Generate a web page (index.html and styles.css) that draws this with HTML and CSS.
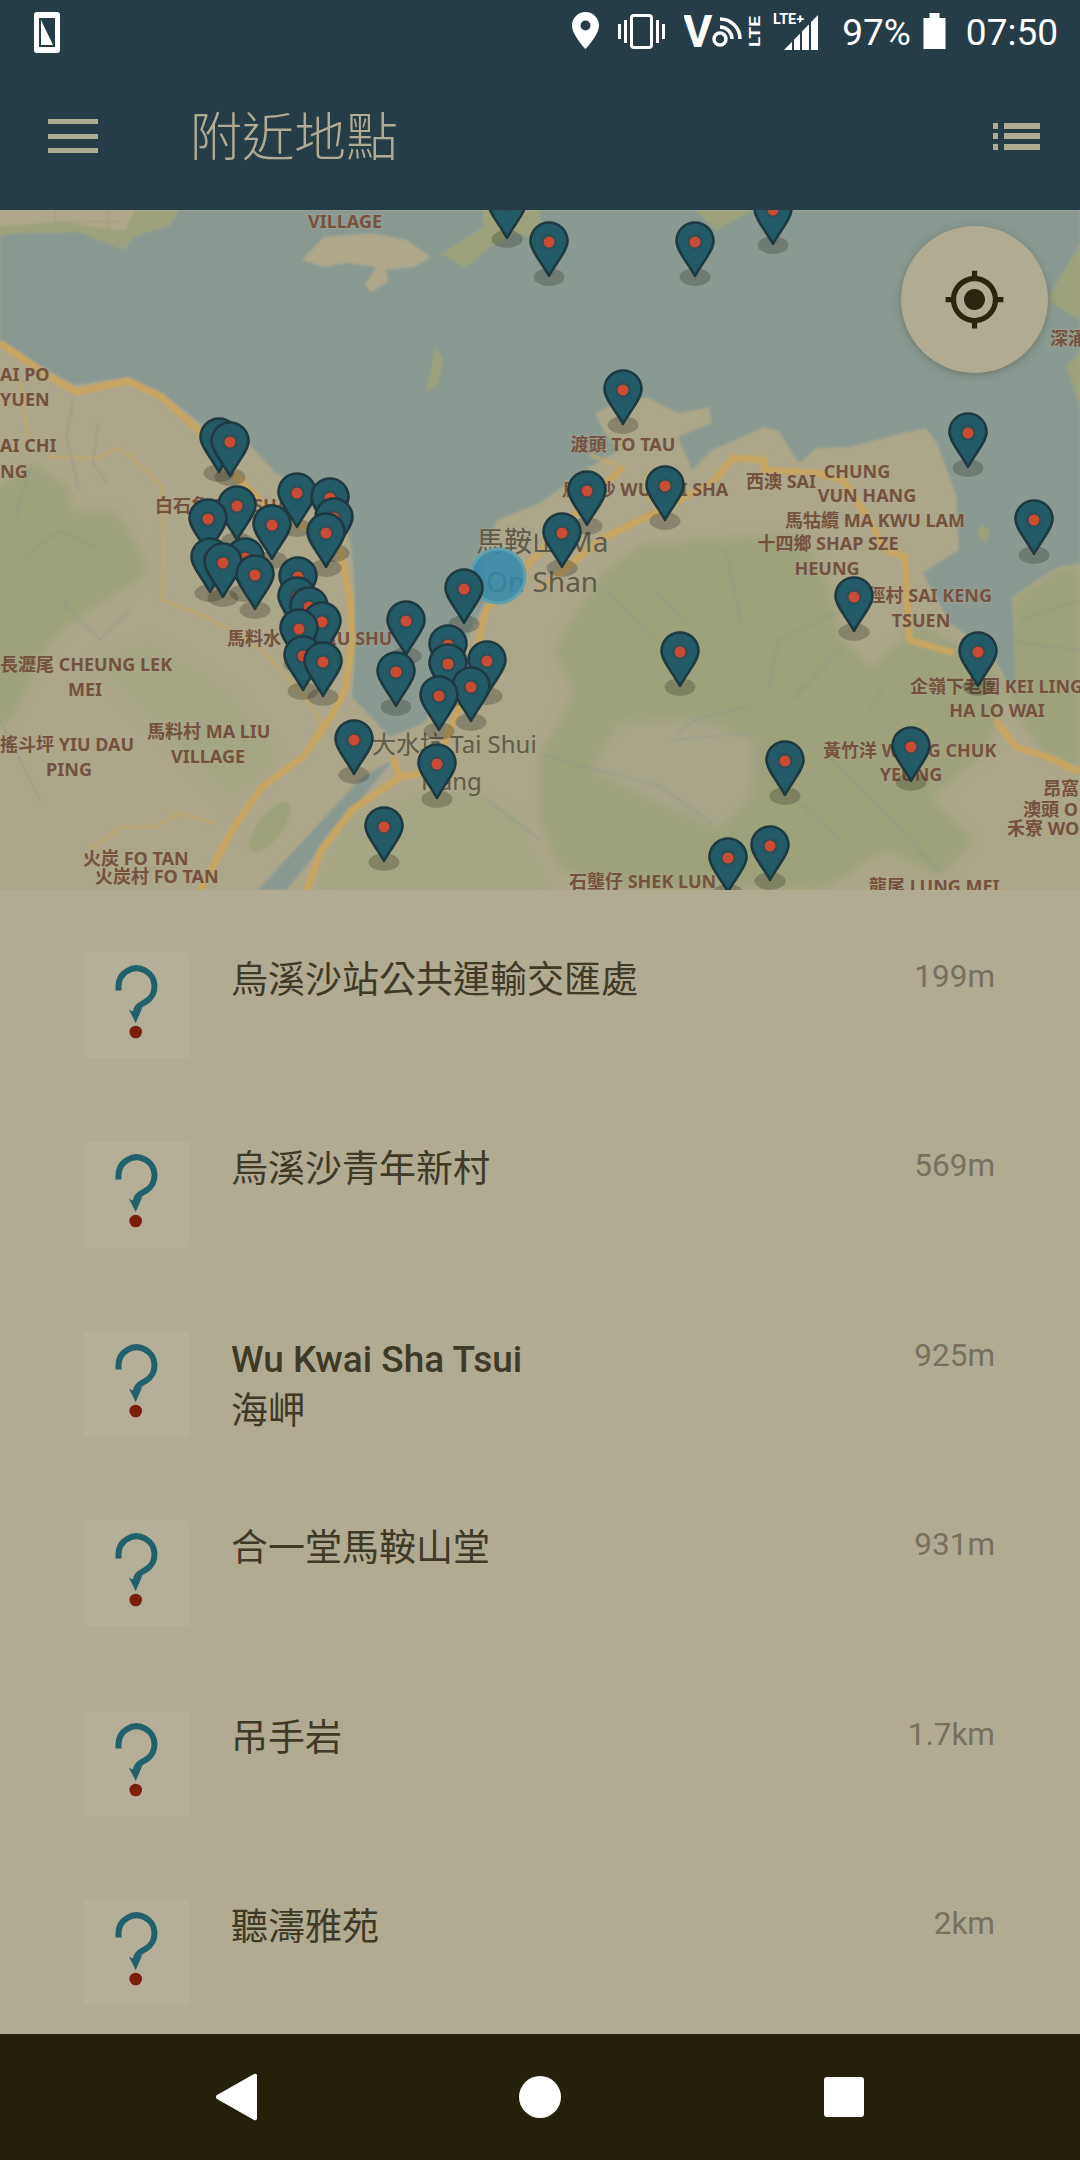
FILE: index.html
```html
<!DOCTYPE html>
<html>
<head lang="zh-Hant">
    <meta charset="UTF-8">
    <title>附近地點</title>
    <link rel="stylesheet" href="styles.css">
</head>
<body>
<div class="screen">
    <header class="appHeader">
        <div class="statusBar">
            <svg class="simIcon" viewBox="0 0 26 41"><path d="M3 0h20a3 3 0 0 1 3 3v35a3 3 0 0 1-3 3H3a3 3 0 0 1-3-3V3a3 3 0 0 1 3-3z" fill="#fff"/><path d="M5 6h16v29H5z" fill="#263c47"/><path d="M7 8l12 25H7z" fill="#fff"/></svg>
            <div class="statusRight">
                <svg class="locIcon" viewBox="0 0 27 37"><path d="M13.500 0C6 0 0 6 0 13.500 0 23 13.500 37 13.500 37S27 23 27 13.500C27 6 21 0 13.500 0zm0 18.500a5 5 0 1 1 0-10 5 5 0 0 1 0 10z" fill="#fff"/></svg>
                <svg class="vibIcon" viewBox="0 0 47 35"><path d="M0 10h3v15H0zM44 10h3v15h-3zM6 6h3v23H6zM38 6h3v23h-3z" fill="#fff"/><rect x="13.500" y="1.500" width="20" height="32" rx="2.500" fill="none" stroke="#fff" stroke-width="3"/></svg>
                <svg class="netIcon" viewBox="0 0 136 66">
                    <text x="-1" y="47" class="netV">V</text>
                    <circle cx="36" cy="39" r="6" fill="none" stroke="#fff" stroke-width="3.500"/>
                    <path d="M36 27a12 12 0 0 1 12 12M36 19a20 20 0 0 1 20 20" fill="none" stroke="#fff" stroke-width="3.500"/>
                    <text transform="translate(76 47) rotate(-90)" class="netLte" textLength="31" lengthAdjust="spacingAndGlyphs">LTE</text>
                    <text x="89" y="24" class="netPlus" textLength="31" lengthAdjust="spacingAndGlyphs">LTE+</text>
                    <path d="M100 50l34-35v35z" fill="#fff"/>
                    <path d="M108 30h2v20h-2zM116 22h2v28h-2zM125 12h2v38h-2z" fill="#263c47"/>
                </svg>
                <span class="batteryText">97%</span>
                <svg class="batIcon" viewBox="0 0 22 36"><path d="M6 0h10v5h6v31H0V5h6z" fill="#fff"/></svg>
                <span class="clockText">07:50</span>
            </div>
        </div>
        <div class="toolBar">
            <div class="menuBtn"><i></i><i></i><i></i></div>
            <h1 class="pageTitle">附近地點</h1>
            <div class="listBtn">
                <div><b></b><i></i></div>
                <div><b></b><i></i></div>
                <div><b></b><i></i></div>
            </div>
        </div>
    </header>

    <div class="mapBox">
        <svg class="mapSvg" viewBox="0 210 1080 680">
            <defs>
                <filter id="soft"><feGaussianBlur stdDeviation="1.3"/></filter>
                <filter id="softer"><feGaussianBlur stdDeviation="5"/></filter>
                <g id="pin">
                    <ellipse cx="0" cy="35" rx="15.500" ry="9" fill="#2b2a1c" opacity=".28"/>
                    <path d="M0 34C-6 22-18.500 9-18.500-1a18.500 18.500 0 0 1 37 0C18.500 9 6 22 0 34z" fill="#225a66" stroke="#1e3a40" stroke-width="2.600" stroke-linejoin="round"/>
                    <circle cx="0" cy="0" r="6.500" fill="#c94b33" stroke="#2d4d55" stroke-width="2"/>
                </g>
            </defs>
            <rect x="0" y="210" width="1080" height="680" fill="#aca68b"/>
            <!-- hills -->
            <g filter="url(#softer)">
                <path class="green" d="M554 650L600 575 640 545 700 540 800 535 826 583 843 640 871 667 902 640 915 620 950 640 992 660 1000 720 981 757 930 797 974 840 940 877 885 850 823 890H640L560 870 540 820 540 757 574 693z"/>
                <path class="green" d="M1012 600L1057 570 1080 565V770L1040 750 1015 710 1005 690z"/>
                <path class="green" d="M-10 490L34 463 70 490 70 510 117 513 145 560 145 575 80 617 50 640 10 720-10 725z"/>
                <path class="greenSoft" d="M310 900L345 820 420 790 470 790 520 820 560 900z"/>
                <path class="greenSoft" d="M150 640L230 690 280 760 230 800 150 720 90 660z"/>
                <path class="beigePatch" d="M619 723L700 720 754 740 750 800 720 830 650 800 590 770z"/>
            </g>
            <g filter="url(#soft)">
                <ellipse class="green" cx="270" cy="827" rx="12" ry="30" transform="rotate(38 270 827)"/>
                <!-- water -->
                <path class="water" d="M0 210H1080V563L1057 567 1012 597 1016 697 992 653 950 623 923 573 959 550 957 510 957 497 937 443 926 428 902 433 850 447 816 448 799 463 778 430 764 427 712 450 692 470 678 437 712 423 709 407 678 413 647 397 609 407 595 413 605 433 619 450 585 470 540 503 497 520 483 550 486 600 462 650 424 723 390 737 352 697 355 650 355 597 352 550 345 520 310 490 276 473 248 443 200 423 162 393 128 377 76 385 52 373 0 343z"/>
                <path class="water" d="M362 777L393 760 286 890H258z"/>
                <path class="land" d="M0 210H179L170 225 133 237 124 250 80 232 20 233 0 236z"/>
                <path class="green" d="M0 236L20 233 80 232 124 250 133 237 170 225 179 210H135L125 231 60 222 0 226z"/>
                <path class="blockLines" d="M55 210V236M108 210V240M60 222H122"/>
                <path class="land" d="M302 260L324 237 370 233 407 240 431 257 414 267 386 270 388 282 371 292 365 285 376 267 348 263 324 267z"/>
                <path class="green" d="M431 258L445 252 483 227 483 210H527L527 227 490 247 465 268 445 255z"/>
                <path class="green" d="M695 210H754L716 230z"/>
                <path class="green" d="M1080 243L1047 300 1080 320z"/>
                <path class="green" d="M1080 350L1066 367 1080 407z"/>
                <path class="green" d="M435 345L443 360 438 385 426 392 432 365z"/>
                <path class="green" d="M981 525L990 530 986 544 977 535z"/>
                <path class="green" d="M540 210V240L510 232 520 210z"/>
                <!-- roads -->
                <g class="road">
                    <path d="M0 343L52 378 76 392 128 381 162 397 200 432 230 470 270 510 310 530 340 550 350 600 352 640 345 690 331 717 303 757 262 787 234 827 200 890"/>
                    <path d="M393 757L400 777 352 810 321 850 307 890"/>
                    <path d="M400 777L434 770 470 680 486 610 505 590 560 530 623 467"/>
                    <path d="M540 590L600 540 660 510 712 483 733 458 764 460 764 470 816 473 843 480 871 523 885 550 905 557 909 640 954 653"/>
                    <path d="M995 720L1016 747 1047 757 1080 772"/>
                </g>
                <g class="roadThin">
                    <path d="M45 457L97 458 117 448 131 457 162 487 164 560 162 600 207 617 262 650 310 703 321 723 303 757"/>
                    <path d="M20 383L28 437"/>
                    <path d="M214 823L179 813 155 827 121 827 90 850"/>
                    <path d="M623 467L590 455M660 510L640 490 650 470"/>
                </g>
                <g class="river">
                    <path d="M74 397L66 437 79 490M98 423L93 463 107 483M605 590L654 640M654 590L685 623M726 550L742 627"/>
                    <path d="M837 613L778 640 768 693M843 647L792 700M885 683L868 713"/>
                    <path d="M540 753L585 767 626 777 661 787 712 823M671 740L747 733M678 733L695 720 754 705"/>
                    <path d="M833 760L885 813 940 873M799 803L843 843M483 797L540 840M1000 640L1080 650M1020 620L1080 600"/>
                    <path d="M30 470L15 520M20 560L60 530 100 550M0 720L40 800M130 610L100 640 60 600"/>
                </g>
            </g>
            <g class="mapLabel">
                <text x="345" y="228" text-anchor="middle">VILLAGE</text>
                <text x="0" y="381">AI PO</text>
                <text x="0" y="406">YUEN</text>
                <text x="0" y="452">AI CHI</text>
                <text x="0" y="478">NG</text>
                <text x="155" y="512">白石角 PAK SHA</text>
                <text x="623" y="451" text-anchor="middle">渡頭 TO TAU</text>
                <text x="645" y="496" text-anchor="middle">烏溪沙 WU KAI SHA</text>
                <text x="781" y="488" text-anchor="middle">西澳 SAI</text>
                <text x="857" y="478" text-anchor="middle">CHUNG</text>
                <text x="867" y="502" text-anchor="middle">VUN HANG</text>
                <text x="875" y="527" text-anchor="middle">馬牯纜 MA KWU LAM</text>
                <text x="828" y="550" text-anchor="middle">十四鄉 SHAP SZE</text>
                <text x="827" y="575" text-anchor="middle">HEUNG</text>
                <text x="1050" y="345">深涌</text>
                <text x="992" y="602" text-anchor="end">西徑村 SAI KENG</text>
                <text x="921" y="627" text-anchor="middle">TSUEN</text>
                <text x="910" y="693">企嶺下老圍 KEI LING</text>
                <text x="997" y="717" text-anchor="middle">HA LO WAI</text>
                <text x="823" y="757">黃竹洋 WONG CHUK</text>
                <text x="911" y="781" text-anchor="middle">YEUNG</text>
                <text x="1043" y="795">昂窩</text>
                <text x="1023" y="816">澳頭 O</text>
                <text x="1007" y="835">禾寮 WO</text>
                <text x="569" y="888">石壟仔 SHEK LUN</text>
                <text x="869" y="893">龍尾 LUNG MEI</text>
                <text x="227" y="645">馬料水 MA LIU SHU</text>
                <text x="0" y="671">長瀝尾 CHEUNG LEK</text>
                <text x="85" y="696" text-anchor="middle">MEI</text>
                <text x="147" y="738">馬料村 MA LIU</text>
                <text x="208" y="763" text-anchor="middle">VILLAGE</text>
                <text x="0" y="751">搖斗坪 YIU DAU</text>
                <text x="69" y="776" text-anchor="middle">PING</text>
                <text x="83" y="865">火炭 FO TAN</text>
                <text x="95" y="883">火炭村 FO TAN</text>
            </g>
            <g class="townLabel">
                <text x="476" y="552">馬鞍山 Ma</text>
                <text x="486" y="592">On Shan</text>
            </g>
            <g class="townLabel townSmall">
                <text x="372" y="753">大水坑 Tai Shui</text>
                <text x="421" y="790">Hang</text>
            </g>
            <circle class="meDot" cx="498" cy="576" r="27"/>
            <use href="#pin" x="507" y="204"/>
            <use href="#pin" x="773" y="210"/>
            <use href="#pin" x="549" y="242"/>
            <use href="#pin" x="695" y="242"/>
            <use href="#pin" x="623" y="390"/>
            <use href="#pin" x="968" y="433"/>
            <use href="#pin" x="219" y="438"/>
            <use href="#pin" x="230" y="442"/>
            <use href="#pin" x="665" y="486"/>
            <use href="#pin" x="587" y="491"/>
            <use href="#pin" x="297" y="493"/>
            <use href="#pin" x="330" y="498"/>
            <use href="#pin" x="237" y="506"/>
            <use href="#pin" x="334" y="518"/>
            <use href="#pin" x="208" y="519"/>
            <use href="#pin" x="1034" y="520"/>
            <use href="#pin" x="272" y="525"/>
            <use href="#pin" x="326" y="533"/>
            <use href="#pin" x="562" y="533"/>
            <use href="#pin" x="210" y="558"/>
            <use href="#pin" x="245" y="558"/>
            <use href="#pin" x="223" y="563"/>
            <use href="#pin" x="255" y="575"/>
            <use href="#pin" x="298" y="577"/>
            <use href="#pin" x="464" y="589"/>
            <use href="#pin" x="854" y="597"/>
            <use href="#pin" x="297" y="597"/>
            <use href="#pin" x="309" y="607"/>
            <use href="#pin" x="406" y="621"/>
            <use href="#pin" x="322" y="622"/>
            <use href="#pin" x="299" y="629"/>
            <use href="#pin" x="448" y="645"/>
            <use href="#pin" x="680" y="652"/>
            <use href="#pin" x="978" y="652"/>
            <use href="#pin" x="303" y="656"/>
            <use href="#pin" x="487" y="661"/>
            <use href="#pin" x="323" y="662"/>
            <use href="#pin" x="448" y="664"/>
            <use href="#pin" x="396" y="672"/>
            <use href="#pin" x="471" y="687"/>
            <use href="#pin" x="439" y="696"/>
            <use href="#pin" x="354" y="740"/>
            <use href="#pin" x="911" y="747"/>
            <use href="#pin" x="785" y="761"/>
            <use href="#pin" x="437" y="764"/>
            <use href="#pin" x="384" y="827"/>
            <use href="#pin" x="770" y="846"/>
            <use href="#pin" x="728" y="858"/>
        </svg>
        <div class="locateBtn">
            <svg viewBox="0 0 24 24"><path d="M12 8c-2.210 0-4 1.790-4 4s1.790 4 4 4 4-1.790 4-4-1.790-4-4-4zm8.940 3c-.46-4.170-3.770-7.480-7.940-7.940V1h-2v2.060C6.830 3.520 3.520 6.830 3.060 11H1v2h2.060c.46 4.170 3.770 7.480 7.940 7.940V23h2v-2.060c4.170-.46 7.480-3.770 7.940-7.940H23v-2h-2.060zM12 19c-3.870 0-7-3.130-7-7s3.130-7 7-7 7 3.130 7 7-3.130 7-7 7z" fill="#2a2410"/></svg>
        </div>
    </div>

    <ul class="placeList">
        <li class="placeRow">
            <div class="placeIcon"><svg viewBox="0 0 105 105"><use href="#unknown"/></svg></div>
            <div class="placeText">烏溪沙站公共運輸交匯處</div>
            <div class="placeDist">199m</div>
        </li>
        <li class="placeRow">
            <div class="placeIcon"><svg viewBox="0 0 105 105"><use href="#unknown"/></svg></div>
            <div class="placeText">烏溪沙青年新村</div>
            <div class="placeDist">569m</div>
        </li>
        <li class="placeRow">
            <div class="placeIcon"><svg viewBox="0 0 105 105"><use href="#unknown"/></svg></div>
            <div class="placeText"><strong>Wu Kwai Sha Tsui</strong><br>海岬</div>
            <div class="placeDist">925m</div>
        </li>
        <li class="placeRow">
            <div class="placeIcon"><svg viewBox="0 0 105 105"><use href="#unknown"/></svg></div>
            <div class="placeText">合一堂馬鞍山堂</div>
            <div class="placeDist">931m</div>
        </li>
        <li class="placeRow">
            <div class="placeIcon"><svg viewBox="0 0 105 105"><use href="#unknown"/></svg></div>
            <div class="placeText">吊手岩</div>
            <div class="placeDist">1.7km</div>
        </li>
        <li class="placeRow">
            <div class="placeIcon"><svg viewBox="0 0 105 105"><use href="#unknown"/></svg></div>
            <div class="placeText">聽濤雅苑</div>
            <div class="placeDist">2km</div>
        </li>
    </ul>

    <nav class="navBar">
        <svg class="navBack" viewBox="0 0 42 50"><path d="M39 2L2 23a2.500 2.500 0 0 0 0 4l37 21a2 2 0 0 0 3-2V4a2 2 0 0 0-3-2z" fill="#fff"/></svg>
        <div class="navHome"></div>
        <div class="navRecent"></div>
    </nav>
</div>

<svg class="iconDefs" width="0" height="0">
    <defs>
        <g id="unknown">
            <path d="M34.500 37.500v-4.200a18 18 0 1 1 27.500 15.300c-5 3-10 4.500-10.300 12" fill="none" stroke="#22606c" stroke-width="6"/>
            <path d="M51.700 70L45 56.700l7 3.300 6.700-6z" fill="#22606c"/>
            <circle cx="51.700" cy="79" r="6.300" fill="#7f1d0b"/>
        </g>
    </defs>
</svg>
</body>
</html>
```

FILE: styles.css
```css
*{padding: 0;margin: 0;box-sizing: border-box;}
body{
    width: 1080px;
    height: 2160px;
    overflow: hidden;
    background: #b1ab94;
    font-family: Roboto, "Noto Sans CJK TC", sans-serif;
}
.screen{
    display: flex;
    flex-direction: column;
    height: 2160px;
}

/* header */
.appHeader{
    height: 210px;
    background: #263c47;
}
.statusBar{
    display: flex;
    align-items: center;
    height: 66px;
    padding: 0 22px 2px 34px;
    color: #fff;
    font-size: 37px;
}
.simIcon{width: 26px;height: 41px;}
.statusRight{
    display: flex;
    align-items: center;
    margin-left: auto;
}
.locIcon{width: 27px;height: 37px;margin-right: 19px;margin-top: -3px;}
.vibIcon{width: 47px;height: 35px;margin-right: 19px;margin-top: -2px;}
.netIcon{width: 136px;height: 66px;margin-right: 22px;margin-top: 2px;}
.netV{font: 700 45px Roboto, sans-serif;fill: #fff;}
.netLte{font: 700 15px Roboto, sans-serif;fill: #fff;}
.netPlus{font: 700 14px Roboto, sans-serif;fill: #fff;}
.batteryText{margin-right: 12px;}
.batIcon{width: 23px;height: 36px;margin-right: 20px;margin-top: -2px;}
.toolBar{
    display: flex;
    align-items: center;
    height: 144px;
    padding: 0 40px 4px 48px;
}
.menuBtn{width: 50px;}
.menuBtn i{
    display: block;
    height: 5px;
    margin-bottom: 9.5px;
    background: #b1ab94;
}
.menuBtn i:last-child{margin-bottom: 0;}
.pageTitle{
    margin: 0 0 6px 92px;
    font-family: "Noto Sans CJK TC", sans-serif;
    font-size: 52px;
    font-weight: 300;
    color: #b1ab94;
}
.listBtn{margin-left: auto;width: 47px;}
.listBtn div{
    display: flex;
    justify-content: space-between;
    margin-bottom: 4.500px;
}
.listBtn div:last-child{margin-bottom: 0;}
.listBtn b{display: block;width: 5px;height: 6px;background: #b1ab94;}
.listBtn i{display: block;width: 36px;height: 6px;background: #b1ab94;}

/* map */
.mapBox{
    position: relative;
    height: 680px;
    overflow: hidden;
}
.mapSvg{display: block;width: 1080px;height: 680px;}
.green{fill: #9da27d;}
.greenSoft{fill: #a5a685;}
.beigePatch{fill: #a9a58b;}
.land{fill: #aea78c;}
.water{fill: #8a9a93;}
.blockLines{fill: none;stroke: #9c9680;stroke-width: 1;}
.road path{fill: none;stroke: #c6a661;stroke-width: 7;stroke-linejoin: round;}
.roadThin path{fill: none;stroke: #c2a767;stroke-width: 3;stroke-linejoin: round;opacity: .8;}
.river path{fill: none;stroke: #84978f;stroke-width: 1.2;opacity: .75;}
.mapLabel text{
    font-family: "Noto Sans", "Noto Sans CJK TC", sans-serif;
    font-size: 18px;
    font-weight: 700;
    fill: #74523f;
    paint-order: stroke;
    stroke: #aea78c;
    stroke-width: 1.500px;
    stroke-opacity: .5;
}
.townLabel text{
    font-family: "Noto Sans", "Noto Sans CJK TC", sans-serif;
    font-size: 28px;
    fill: #5f5b4a;
    paint-order: stroke;
    stroke: #aea78c;
    stroke-width: 2px;
    stroke-opacity: .5;
}
.townSmall text{font-size: 24px;}
.meDot{fill: #3389ac;fill-opacity: .85;stroke: #5f9fae;stroke-width: 3;}
.locateBtn{
    position: absolute;
    left: 901px;
    top: 16px;
    display: flex;
    align-items: center;
    justify-content: center;
    width: 147px;
    height: 147px;
    border-radius: 50%;
    background: #b1ab94;
    box-shadow: 0 2px 8px rgba(40,40,20,.3);
}
.locateBtn svg{width: 63px;height: 63px;}

/* list */
.placeList{
    flex: 1;
    padding: 63px 85px 0 84px;
    list-style-type: none;
    overflow: hidden;
}
.placeRow{
    display: flex;
    height: 189.4px;
}
.placeIcon{
    width: 105px;
    height: 105px;
    background: #b5af99;
}
.placeIcon svg{display: block;width: 105px;height: 105px;}
.placeText{
    flex: 1;
    margin-left: 42px;
    font-family: "Noto Sans CJK TC", sans-serif;
    font-size: 37px;
    line-height: 48px;
    color: #3f3a27;
}
.placeText strong{
    font-family: Roboto, sans-serif;
    font-weight: 500;
}
.placeDist{
    padding-top: 2px;
    font-size: 31.5px;
    line-height: 44px;
    color: #767160;
}

/* bottom bar */
.navBar{
    display: flex;
    align-items: center;
    height: 126px;
    background: #25200c;
    padding-left: 215px;
}
.navBack{width: 42px;height: 50px;margin-right: 262px;}
.navHome{width: 42px;height: 42px;border-radius: 50%;background: #fff;margin-right: 263px;}
.navRecent{width: 40px;height: 40px;border-radius: 3px;background: #fff;}
.iconDefs{position: absolute;}
```
